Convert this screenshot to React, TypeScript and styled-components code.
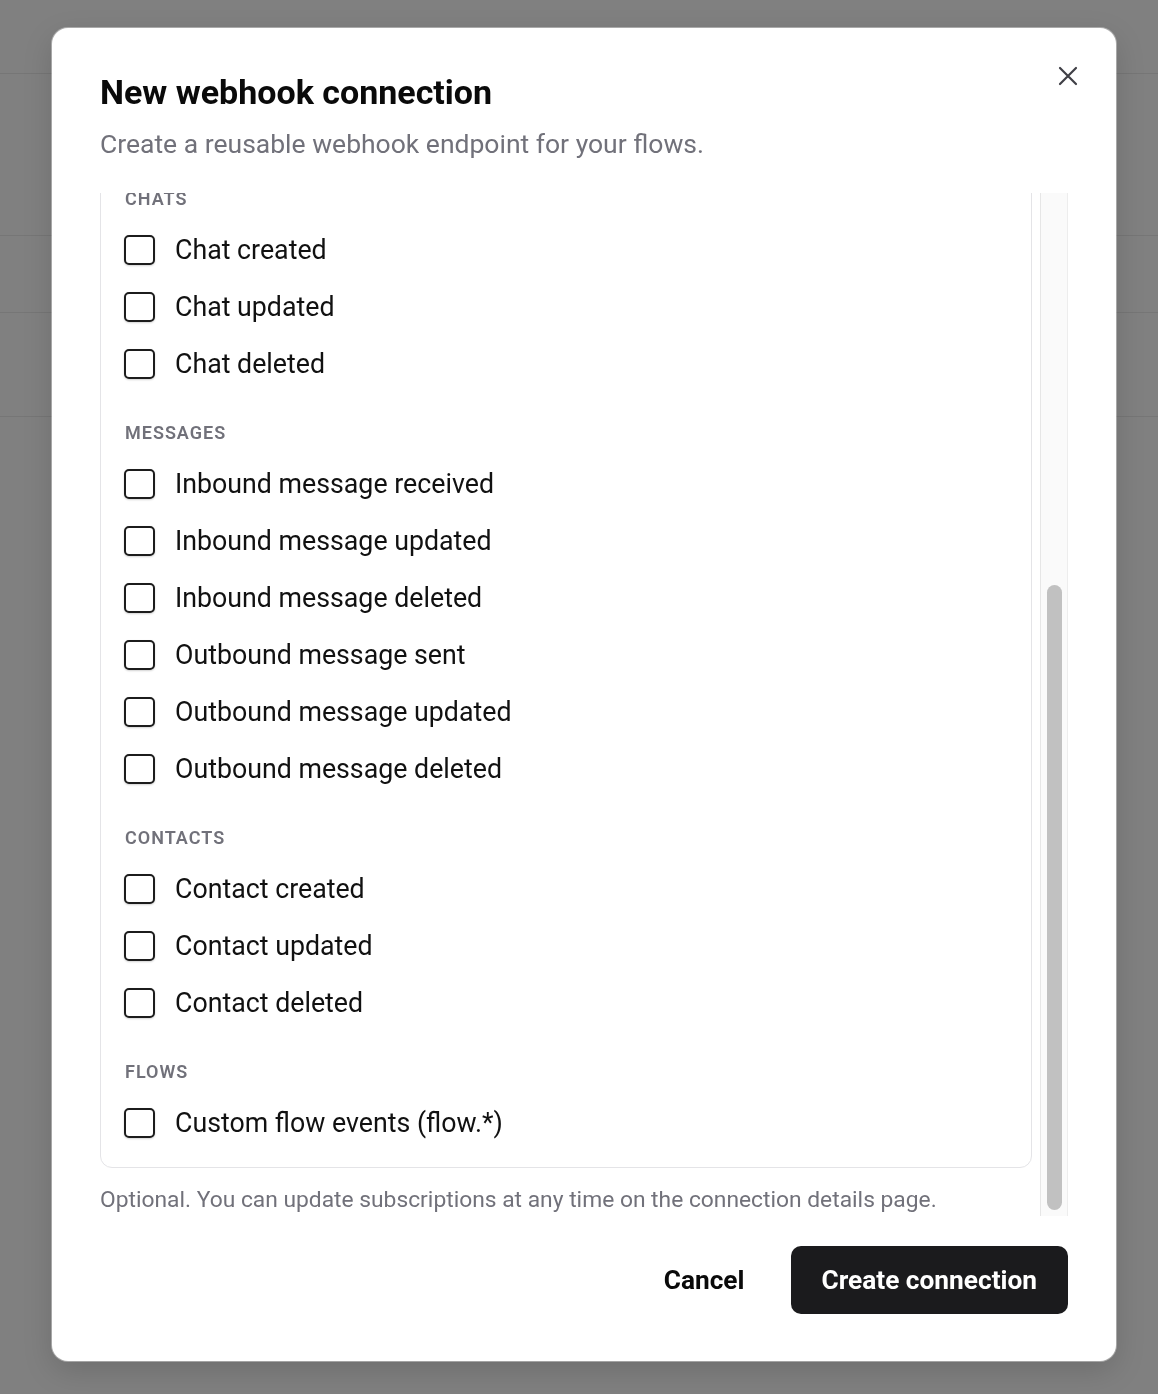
import { useLayoutEffect, useRef, useState } from "react";
import styled, { createGlobalStyle } from "styled-components";

const GlobalStyle = createGlobalStyle`
  html, body {
    margin: 0;
    padding: 0;
    background: #808080;
    font-family: Roboto, "Liberation Sans", Arial, sans-serif;
  }
  * { box-sizing: border-box; }
`;

const Backdrop = styled.div`
  min-height: 1394px;
  display: flex;
  flex-direction: column;
  background: #808080;
`;

const BackdropRow = styled.div<{ $h: number }>`
  height: ${(p) => p.$h}px;
  border-bottom: 1px solid #767676;
`;

const Dialog = styled.div`
  position: fixed;
  top: 28px;
  left: 52px;
  width: 1064px;
  height: 1333px;
  background: #fff;
  border-radius: 16px;
  box-shadow: 0 0 0 1px rgba(255, 255, 255, 0.35), 0 10px 30px rgba(0, 0, 0, 0.15);
  padding: 44px 48px 47px;
  display: flex;
  flex-direction: column;
`;

const Title = styled.h2`
  margin: 0;
  font-size: 34px;
  line-height: 40px;
  font-weight: 700;
  color: #0a0a0a;
`;

const Subtitle = styled.p`
  margin: 16px 0 0;
  font-size: 26.5px;
  line-height: 32px;
  color: #71717a;
`;

const CloseButton = styled.button`
  position: absolute;
  top: 34px;
  right: 34px;
  width: 28px;
  height: 28px;
  padding: 0;
  border: none;
  background: transparent;
  display: flex;
  align-items: center;
  justify-content: center;
  cursor: pointer;
`;

const ScrollFrame = styled.div`
  margin-top: 33px;
  height: 1023px;
  flex-shrink: 0;
  display: flex;
`;

const ScrollArea = styled.div`
  flex: 1;
  min-width: 0;
  overflow-y: auto;
  padding-right: 8px;
  scrollbar-width: none;

  &::-webkit-scrollbar {
    display: none;
  }
`;

const ScrollTrack = styled.div`
  position: relative;
  width: 28px;
  flex-shrink: 0;
  background: #fafafa;
  border-left: 1px solid #e6e6e6;
  border-right: 1px solid #ededed;
`;

const ScrollThumb = styled.div`
  position: absolute;
  left: 6px;
  width: 15px;
  border-radius: 8px;
  background: #c1c1c1;
`;

const FormStack = styled.div`
  display: flex;
  flex-direction: column;
  gap: 24px;
`;

const Field = styled.div`
  display: flex;
  flex-direction: column;
  gap: 8px;
`;

const FieldLabel = styled.label`
  font-size: 22px;
  line-height: 32px;
  font-weight: 500;
  color: #111;
`;

const Input = styled.div<{ $h: number }>`
  height: ${(p) => p.$h}px;
  border: 1px solid #e4e4e7;
  border-radius: 10px;
  padding: 0 20px;
  display: flex;
  align-items: ${(p) => (p.$h > 80 ? "flex-start" : "center")};
  padding-top: ${(p) => (p.$h > 80 ? "16px" : "0")};
  font-size: 24px;
  color: #a1a1aa;
`;

const EventsHead = styled.div`
  display: flex;
  flex-direction: column;
  gap: 4px;
  margin-bottom: 16px;
`;

const Hint = styled.p`
  margin: 0;
  font-size: 22px;
  line-height: 32px;
  color: #71717a;
`;

const EventsBox = styled.div`
  border: 1px solid #e4e4e7;
  border-radius: 12px;
  padding: 24px 23px 16px;
  display: flex;
  flex-direction: column;
  gap: 29px;
`;

const Section = styled.div`
  display: flex;
  flex-direction: column;
`;

const SectionTitle = styled.div`
  font-size: 18px;
  line-height: 24px;
  font-weight: 600;
  letter-spacing: 1px;
  text-transform: uppercase;
  color: #71717a;
  margin-bottom: 10px;
  padding-left: 1px;
`;

const Option = styled.label`
  height: 57px;
  display: flex;
  align-items: center;
  gap: 20px;
  font-size: 26.75px;
  color: #111;
  cursor: pointer;
`;

const Box = styled.span`
  width: 31px;
  height: 30px;
  flex-shrink: 0;
  border: 2px solid #1c1c1c;
  border-radius: 5px;
  background: #fff;
  box-shadow: 0 1px 2px rgba(0, 0, 0, 0.18);
`;

const HelpText = styled.p`
  margin: 16px 0 0;
  font-size: 22.8px;
  line-height: 32px;
  color: #71717a;
`;

const Footer = styled.div`
  margin-top: 30px;
  display: flex;
  justify-content: flex-end;
  gap: 22px;
`;

const Button = styled.button<{ $variant: "ghost" | "dark" }>`
  height: 68px;
  padding: 0 ${(p) => (p.$variant === "dark" ? "31px" : "24px")};
  border: none;
  border-radius: 10px;
  font-family: inherit;
  font-size: 26.25px;
  font-weight: 700;
  background: ${(p) => (p.$variant === "dark" ? "#1b1b1d" : "transparent")};
  color: ${(p) => (p.$variant === "dark" ? "#fff" : "#0a0a0a")};
  cursor: pointer;
`;

const groups = [
  { title: "Chats", items: ["Chat created", "Chat updated", "Chat deleted"] },
  {
    title: "Messages",
    items: [
      "Inbound message received",
      "Inbound message updated",
      "Inbound message deleted",
      "Outbound message sent",
      "Outbound message updated",
      "Outbound message deleted",
    ],
  },
  { title: "Contacts", items: ["Contact created", "Contact updated", "Contact deleted"] },
  { title: "Flows", items: ["Custom flow events (flow.*)"] },
];

const INSET = 6;

export default function App() {
  const scrollRef = useRef<HTMLDivElement>(null);
  const [thumb, setThumb] = useState({ top: INSET, height: 0 });

  const measure = () => {
    const el = scrollRef.current;
    if (!el) return;
    const inner = el.clientHeight - INSET * 2;
    const height = Math.max(40, (inner * el.clientHeight) / el.scrollHeight);
    const max = el.scrollHeight - el.clientHeight;
    const top = INSET + (max > 0 ? ((inner - height) * el.scrollTop) / max : 0);
    setThumb({ top, height });
  };

  useLayoutEffect(() => {
    const el = scrollRef.current;
    if (el) el.scrollTop = el.scrollHeight;
    measure();
  }, []);

  return (
    <>
      <GlobalStyle />
      <Backdrop>
        <BackdropRow $h={74} />
        <BackdropRow $h={162} />
        <BackdropRow $h={77} />
        <BackdropRow $h={104} />
      </Backdrop>
      <Dialog role="dialog">
        <Title>New webhook connection</Title>
        <Subtitle>Create a reusable webhook endpoint for your flows.</Subtitle>
        <CloseButton aria-label="Close">
          <svg width="20" height="20" viewBox="0 0 20 20" fill="none">
            <path d="M2 2L18 18M18 2L2 18" stroke="#3f3f46" strokeWidth="2.2" strokeLinecap="round" />
          </svg>
        </CloseButton>

        <ScrollFrame>
          <ScrollArea ref={scrollRef} onScroll={measure}>
            <FormStack>
              <Field>
                <FieldLabel>Name</FieldLabel>
                <Input $h={64}>My webhook</Input>
              </Field>
              <Field>
                <FieldLabel>Endpoint URL</FieldLabel>
                <Input $h={197}>https://example.com/webhooks</Input>
              </Field>
              <Field>
                <FieldLabel>Signing secret</FieldLabel>
                <Input $h={64}>Generated automatically</Input>
              </Field>
              <div>
                <EventsHead>
                  <FieldLabel>Event subscriptions</FieldLabel>
                  <Hint>Choose which events are sent to this endpoint.</Hint>
                </EventsHead>
                <EventsBox>
                  {groups.map((g) => (
                    <Section key={g.title}>
                      <SectionTitle>{g.title}</SectionTitle>
                      {g.items.map((item) => (
                        <Option key={item}>
                          <Box />
                          {item}
                        </Option>
                      ))}
                    </Section>
                  ))}
                </EventsBox>
                <HelpText>
                  Optional. You can update subscriptions at any time on the connection details page.
                </HelpText>
              </div>
            </FormStack>
          </ScrollArea>
          <ScrollTrack>
            <ScrollThumb style={{ top: thumb.top, height: thumb.height }} />
          </ScrollTrack>
        </ScrollFrame>

        <Footer>
          <Button $variant="ghost">Cancel</Button>
          <Button $variant="dark">Create connection</Button>
        </Footer>
      </Dialog>
    </>
  );
}
